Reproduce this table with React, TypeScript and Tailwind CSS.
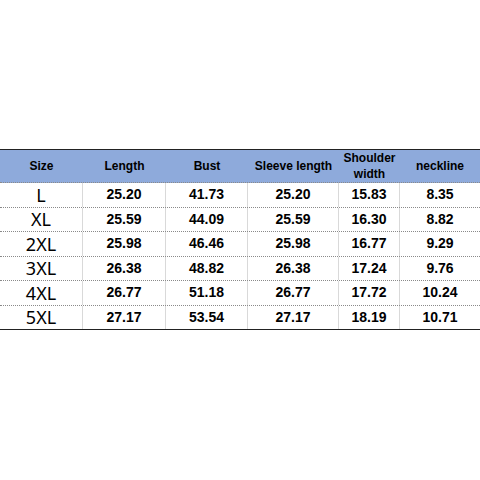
const headers = ["Size", "Length", "Bust", "Sleeve length", "Shoulder width", "neckline"];

const rows = [
  ["L", "25.20", "41.73", "25.20", "15.83", "8.35"],
  ["XL", "25.59", "44.09", "25.59", "16.30", "8.82"],
  ["2XL", "25.98", "46.46", "25.98", "16.77", "9.29"],
  ["3XL", "26.38", "48.82", "26.38", "17.24", "9.76"],
  ["4XL", "26.77", "51.18", "26.77", "17.72", "10.24"],
  ["5XL", "27.17", "53.54", "27.17", "18.19", "10.71"],
];

const cols = "grid grid-cols-[83px_83px_82px_91px_61px_80px]";

const App = () => {
  return (
    <main className="h-[480px] w-[480px] bg-white pt-[149px] font-['Liberation_Sans',Arial,sans-serif] text-black">
      <div className="border-t border-[#222]">
        <div
          className={`${cols} h-[33px] border-b border-dotted border-[#8a8a8a] bg-[#8eaadb] text-[12px] font-bold leading-[16px]`}
        >
          {headers.map((h) => (
            <div key={h} className="flex items-center justify-center px-1 text-center">
              {h === "Shoulder width" ? (
                <span>
                  Shoulder
                  <br />
                  width
                </span>
              ) : (
                h
              )}
            </div>
          ))}
        </div>
      </div>
      {rows.map((r, i) => (
        <div
          key={r[0]}
          className={`${cols} h-[24.5px] border-b ${
            i === rows.length - 1 ? "border-solid border-[#222]" : "border-dotted border-[#8a8a8a]"
          }`}
        >
          {r.map((c, j) =>
            j === 0 ? (
              <div
                key={j}
                className="flex items-center justify-center border-r border-solid border-[#d9d9d9] font-['Noto_Sans',sans-serif] text-[18px] leading-none"
              >
                {c}
              </div>
            ) : (
              <div
                key={j}
                className={`flex items-center justify-center text-[14px] font-bold ${
                  j < 5 ? "border-r border-solid border-[#d9d9d9]" : ""
                }`}
              >
                {c}
              </div>
            )
          )}
        </div>
      ))}
    </main>
  );
};

export default App;
